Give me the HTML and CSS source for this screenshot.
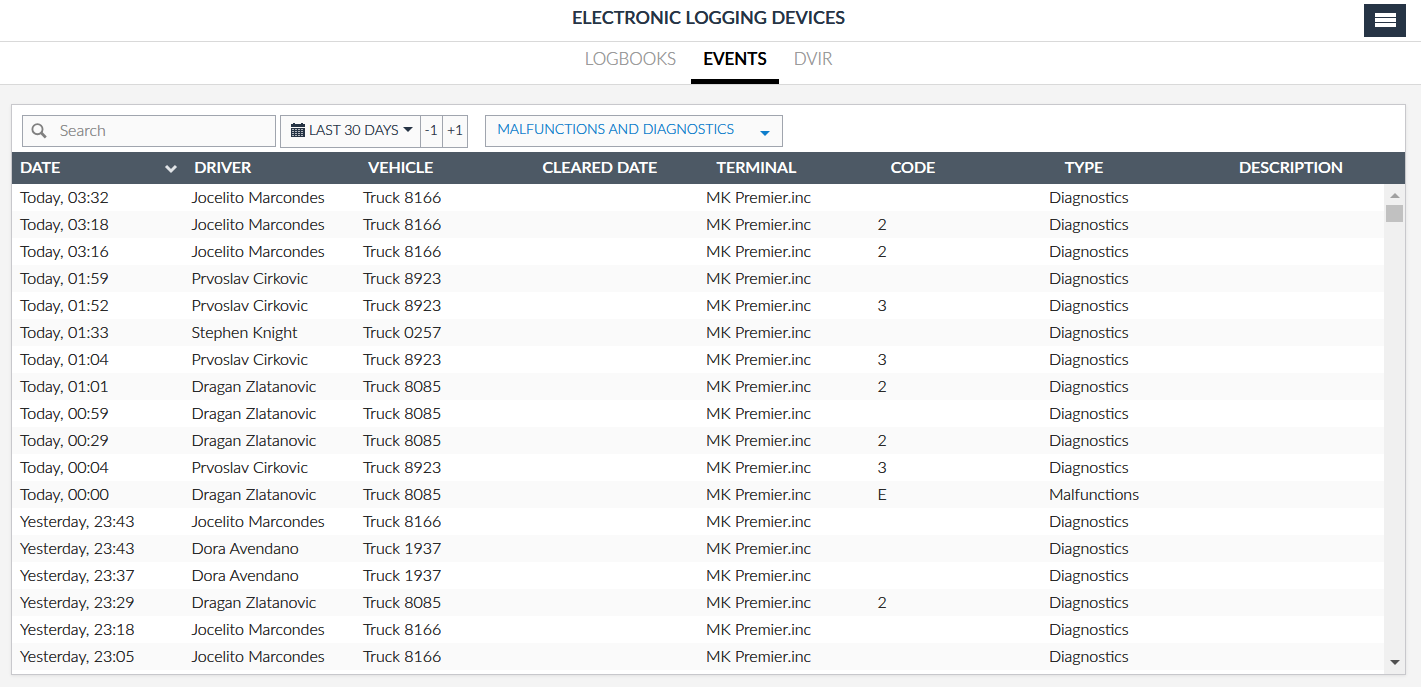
FILE: index.html
```html
<!DOCTYPE html>
<html lang="en">
<head>
    <meta charset="UTF-8">
    <meta name="viewport" content="width=device-width, initial-scale=1.0">
    <title>Electronic Logging Devices</title>
    <link rel="stylesheet" href="styles.css">
</head>
<body>

    <header class="topbar">
        <h1>ELECTRONIC LOGGING DEVICES</h1>
        <button class="menu-button" aria-label="Menu">
            <span></span>
            <span></span>
            <span></span>
        </button>
    </header>

    <nav class="tabs">
        <a href="#logbooks">LOGBOOKS</a>
        <a href="#events" class="active">EVENTS</a>
        <a href="#dvir">DVIR</a>
    </nav>

    <main class="panel">
        <form class="toolbar">
            <div class="search">
                <svg width="18" height="18" viewBox="0 0 18 18" aria-hidden="true">
                    <circle cx="7" cy="7" r="5.500" fill="none" stroke="#808080" stroke-width="2"/>
                    <path d="M11 11L16 16" stroke="#808080" stroke-width="3"/>
                </svg>
                <input type="text" id="search" placeholder="Search" aria-label="Search">
            </div>

            <div class="range">
                <button type="button" class="range-main">
                    <svg width="14" height="14" viewBox="0 0 14 14" aria-hidden="true">
                        <path fill="#263445" d="M0 1h2V0h2v1h6V0h2v1h2v3H0z"/>
                        <path fill="#263445" d="M0 5h14v9H0z"/>
                        <path stroke="#b4b9c0" stroke-dasharray="2 1" d="M1 6.500h12M1 8.500h12M1 10.500h12M1 12.500h12"/>
                    </svg>
                    LAST 30 DAYS
                    <i class="caret"></i>
                </button>
                <button type="button">-1</button>
                <button type="button">+1</button>
            </div>

            <div class="filter">
                <select id="filter" aria-label="Event type">
                    <option>MALFUNCTIONS AND DIAGNOSTICS</option>
                    <option>MALFUNCTIONS</option>
                    <option>DIAGNOSTICS</option>
                </select>
                <i class="caret"></i>
            </div>
        </form>

        <div class="grid">
            <table>
                <thead>
                    <tr>
                        <th class="sorted">
                            DATE
                            <svg width="14" height="10" viewBox="0 0 14 10" aria-hidden="true">
                                <path d="M2 2l5 5 5-5" fill="none" stroke="#e1e4e7" stroke-width="3"/>
                            </svg>
                        </th>
                        <th>DRIVER</th>
                        <th>VEHICLE</th>
                        <th>CLEARED DATE</th>
                        <th>TERMINAL</th>
                        <th>CODE</th>
                        <th>TYPE</th>
                        <th>DESCRIPTION</th>
                    </tr>
                </thead>
                <tbody id="events"></tbody>
            </table>
            <div class="scrollbar">
                <i class="arrow-up"></i>
                <div class="thumb"></div>
                <i class="arrow-down"></i>
            </div>
        </div>
    </main>

    <script>
        // date, driver, vehicle, code, type
        const events = [
            ["Today, 03:32", "Jocelito Marcondes", "Truck 8166", "", "Diagnostics"],
            ["Today, 03:18", "Jocelito Marcondes", "Truck 8166", "2", "Diagnostics"],
            ["Today, 03:16", "Jocelito Marcondes", "Truck 8166", "2", "Diagnostics"],
            ["Today, 01:59", "Prvoslav Cirkovic", "Truck 8923", "", "Diagnostics"],
            ["Today, 01:52", "Prvoslav Cirkovic", "Truck 8923", "3", "Diagnostics"],
            ["Today, 01:33", "Stephen Knight", "Truck 0257", "", "Diagnostics"],
            ["Today, 01:04", "Prvoslav Cirkovic", "Truck 8923", "3", "Diagnostics"],
            ["Today, 01:01", "Dragan Zlatanovic", "Truck 8085", "2", "Diagnostics"],
            ["Today, 00:59", "Dragan Zlatanovic", "Truck 8085", "", "Diagnostics"],
            ["Today, 00:29", "Dragan Zlatanovic", "Truck 8085", "2", "Diagnostics"],
            ["Today, 00:04", "Prvoslav Cirkovic", "Truck 8923", "3", "Diagnostics"],
            ["Today, 00:00", "Dragan Zlatanovic", "Truck 8085", "E", "Malfunctions"],
            ["Yesterday, 23:43", "Jocelito Marcondes", "Truck 8166", "", "Diagnostics"],
            ["Yesterday, 23:43", "Dora Avendano", "Truck 1937", "", "Diagnostics"],
            ["Yesterday, 23:37", "Dora Avendano", "Truck 1937", "", "Diagnostics"],
            ["Yesterday, 23:29", "Dragan Zlatanovic", "Truck 8085", "2", "Diagnostics"],
            ["Yesterday, 23:18", "Jocelito Marcondes", "Truck 8166", "", "Diagnostics"],
            ["Yesterday, 23:05", "Jocelito Marcondes", "Truck 8166", "", "Diagnostics"]
        ];

        const tbody = document.getElementById('events');

        events.forEach(function ([date, driver, vehicle, code, type]) {
            const row = document.createElement('tr');
            row.innerHTML = `
                <td>${date}</td>
                <td>${driver}</td>
                <td>${vehicle}</td>
                <td></td>
                <td>MK Premier.inc</td>
                <td>${code}</td>
                <td>${type}</td>
                <td></td>
            `;
            tbody.appendChild(row);
        });
    </script>

</body>
</html>
```
FILE: styles.css
```css
* {
    box-sizing: border-box;
}
body {
    margin: 0;
    background-color: #f4f4f4;
    color: #222;
    font-family: Lato, sans-serif;
    font-size: 16px;
    font-weight: 300;
    text-shadow: 0 0 0 currentColor;
}
button, input, select {
    font-family: inherit;
    font-weight: inherit;
    color: inherit;
    text-shadow: inherit;
}
.topbar {
    display: grid;
    grid-template-columns: 1fr auto 1fr;
    align-items: start;
    height: 42px;
    padding: 4px 15px 0 11px;
    background-color: white;
    border-bottom: 1px solid #d9d9d9;
}
.topbar h1 {
    grid-column: 2;
    margin: 0;
    font-size: 18px;
    line-height: 26px;
    font-weight: 500;
    color: #263445;
}
.menu-button {
    display: flex;
    flex-direction: column;
    align-items: center;
    justify-content: center;
    gap: 1px;
    justify-self: end;
    width: 42px;
    height: 33px;
    padding: 0 0 2px;
    background-color: #263445;
    border: none;
    cursor: pointer;
}
.menu-button span {
    width: 21px;
    height: 4px;
    background-color: white;
}
.tabs {
    display: flex;
    justify-content: center;
    gap: 3px;
    height: 43px;
    padding-right: 4px;
    background-color: white;
    border-bottom: 1px solid #d9d9d9;
}
.tabs a {
    padding: 0 12px;
    font-size: 17px;
    line-height: 34px;
    color: #999;
    text-decoration: none;
}
.tabs a.active {
    color: black;
    font-weight: 500;
    border-bottom: 5px solid black;
}
.panel {
    margin: 19px 15px 12px 11px;
    background-color: white;
    border: 1px solid #c8c8cc;
    box-shadow: 0 1px 3px rgba(0, 0, 0, 0.08);
}
.toolbar {
    display: flex;
    align-items: flex-start;
    height: 47px;
    padding: 10px 10px 0;
}
.search {
    display: flex;
    align-items: center;
    width: 254px;
    height: 32px;
    padding-left: 8px;
    background-color: #fafafa;
    border: 1px solid #a0a5ae;
}
.search input {
    width: 100%;
    padding: 0 12px 3px;
    font-size: 16px;
    background: none;
    border: none;
    outline: none;
}
.search input::placeholder {
    color: #888;
}
.range {
    display: flex;
    height: 33px;
    margin-left: 4px;
    border: 1px solid #a0a5ae;
}
.range button {
    display: flex;
    align-items: center;
    gap: 4px;
    padding: 0 4px 4px;
    font-size: 14px;
    color: #263445;
    background-color: #fafafa;
    border: none;
    border-left: 1px solid #a0a5ae;
    cursor: pointer;
}
.range .range-main {
    padding: 0 7px 4px 10px;
    border-left: none;
}
.caret {
    border: 5px solid transparent;
    border-top-color: currentColor;
    border-bottom: none;
}
.filter {
    display: flex;
    align-items: center;
    width: 298px;
    height: 32px;
    margin-left: 17px;
    padding-right: 12px;
    background-color: #fafafa;
    border: 1px solid #a0a5ae;
    color: #0d7dcb;
}
.filter select {
    flex: 1;
    height: 30px;
    padding: 0 11px 5px;
    font-size: 14px;
    background: none;
    border: none;
    appearance: none;
}
.filter .caret {
    margin-top: 4px;
}
.grid {
    position: relative;
    padding-bottom: 4px;
}
table, thead, tbody {
    display: block;
}
tr {
    display: table;
    width: 100%;
    table-layout: fixed;
    border-spacing: 0;
}
th, td {
    padding: 0 8px 2px;
    text-align: left;
    white-space: nowrap;
}
th {
    height: 32px;
    padding-bottom: 4px;
    font-weight: 500;
    color: white;
    background-color: #4d5965;
}
.sorted svg {
    float: right;
    margin-top: 7px;
}
tbody {
    margin-right: 21px;
}
td {
    height: 27px;
}
tbody tr:nth-child(even) {
    background-color: #fafafa;
}
.scrollbar {
    position: absolute;
    top: 32px;
    right: 0;
    bottom: 0;
    display: flex;
    flex-direction: column;
    align-items: center;
    width: 21px;
    padding: 9px 0;
    background-color: #f0f0f0;
}
.scrollbar .thumb {
    width: 17px;
    height: 17px;
    margin-top: 7px;
    background-color: #c1c1c1;
}
.arrow-up {
    border: 5px solid transparent;
    border-bottom-color: #a0a0a0;
    border-top: none;
}
.arrow-down {
    margin-top: auto;
    border: 5px solid transparent;
    border-top-color: #505050;
    border-bottom: none;
}
```
